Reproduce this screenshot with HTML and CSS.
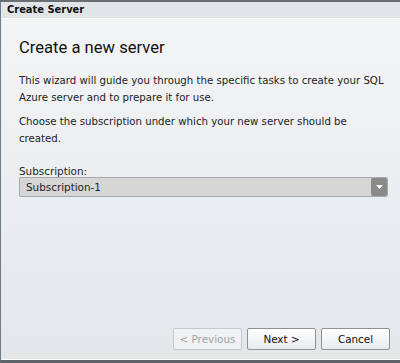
FILE: index.html
```html
<!DOCTYPE html>
<html>
<head>
<meta charset="utf-8">
<link rel="stylesheet" href="styles.css">
</head>
<body>
<div class="window">
  <div class="titlebar">Create Server</div>
  <div class="content">
    <h1 class="heading">Create a new server</h1>
    <p class="para">This wizard will guide you through the specific tasks to create your SQL<br>Azure server and to prepare it for use.</p>
    <p class="para">Choose the subscription under which your new server should be<br>created.</p>
    <div class="field">
      <label class="label">Subscription:</label>
      <div class="select">
        <span class="select-text">Subscription-1</span>
        <span class="select-btn"><svg width="7" height="4" viewBox="0 0 7 4"><path d="M0 0H7L3.5 4Z" fill="#fff"/></svg></span>
      </div>
    </div>
    <div class="spacer"></div>
    <div class="buttons">
      <button class="btn disabled">&lt; Previous</button>
      <button class="btn">Next &gt;</button>
      <button class="btn">Cancel</button>
    </div>
  </div>
</div>
</body>
</html>
```
FILE: styles.css
```css
html, body { margin: 0; padding: 0; }
body {
  width: 400px; height: 363px; overflow: hidden;
  font-family: "DejaVu Sans", sans-serif;
  background: #656b70;
}
.window {
  box-sizing: border-box;
  width: 400px; height: 363px;
  border-top: 2px solid #696e73;
  border-left: 1px solid #6d7c88;
  border-bottom: 3px solid #5f6468;
  display: flex; flex-direction: column;
  background: #fff;
}
.titlebar {
  height: 16px;
  background: #e2e5e8;
  border-bottom: 1px solid #fff;
  font-family: "DejaVu Sans Condensed", "DejaVu Sans", sans-serif;
  font-weight: bold; font-size: 11px; color: #111;
  padding-left: 6px; line-height: 16px;
  box-sizing: content-box;
}
.content {
  flex: 1;
  display: flex; flex-direction: column;
  padding: 0 10px 9px 18px;
  background: linear-gradient(#f3f4f6, #e3e7ea);
  border-bottom: 1px solid #fff;
}
.heading {
  margin: 17px 0 0 0;
  font-family: Roboto, "Liberation Sans", sans-serif;
  font-weight: normal; font-size: 16.6px; color: #111;
  line-height: 24px;
}
.para {
  margin: 12px -8px 0 0;
  font-size: 10.2px; line-height: 17px; color: #222;
  white-space: nowrap;
}
.para + .para { margin-top: 7px; }
.field { margin-top: 18px; }
.label { display: block; font-size: 10.4px; line-height: 12px; color: #222; }
.select {
  margin-top: 0;
  height: 18px;
  border: 1px solid #a6a9ac;
  border-radius: 2px;
  background: #d6d6d6;
  display: flex; align-items: center; justify-content: space-between;
  padding: 0 0 0 6px;
  margin-right: 2px;
}
.select-text { font-size: 10.4px; color: #222; }
.select-btn {
  width: 16px; height: 18px; background: #8a8a8a; border-radius: 2px;
  display: flex; align-items: center; justify-content: center;
}
.spacer { flex: 1; }
.buttons { display: flex; justify-content: flex-end; gap: 5px; }
.btn {
  width: 69px; height: 22px;
  font-family: inherit; font-size: 10.4px; color: #111;
  border: 1px solid #8d9196; border-radius: 2px;
  background: linear-gradient(#ffffff, #e8eaec);
  padding: 0;
}
.btn.disabled { color: #a0a4a8; border-color: #c6c9cc; background: #f0f1f2; }
```
